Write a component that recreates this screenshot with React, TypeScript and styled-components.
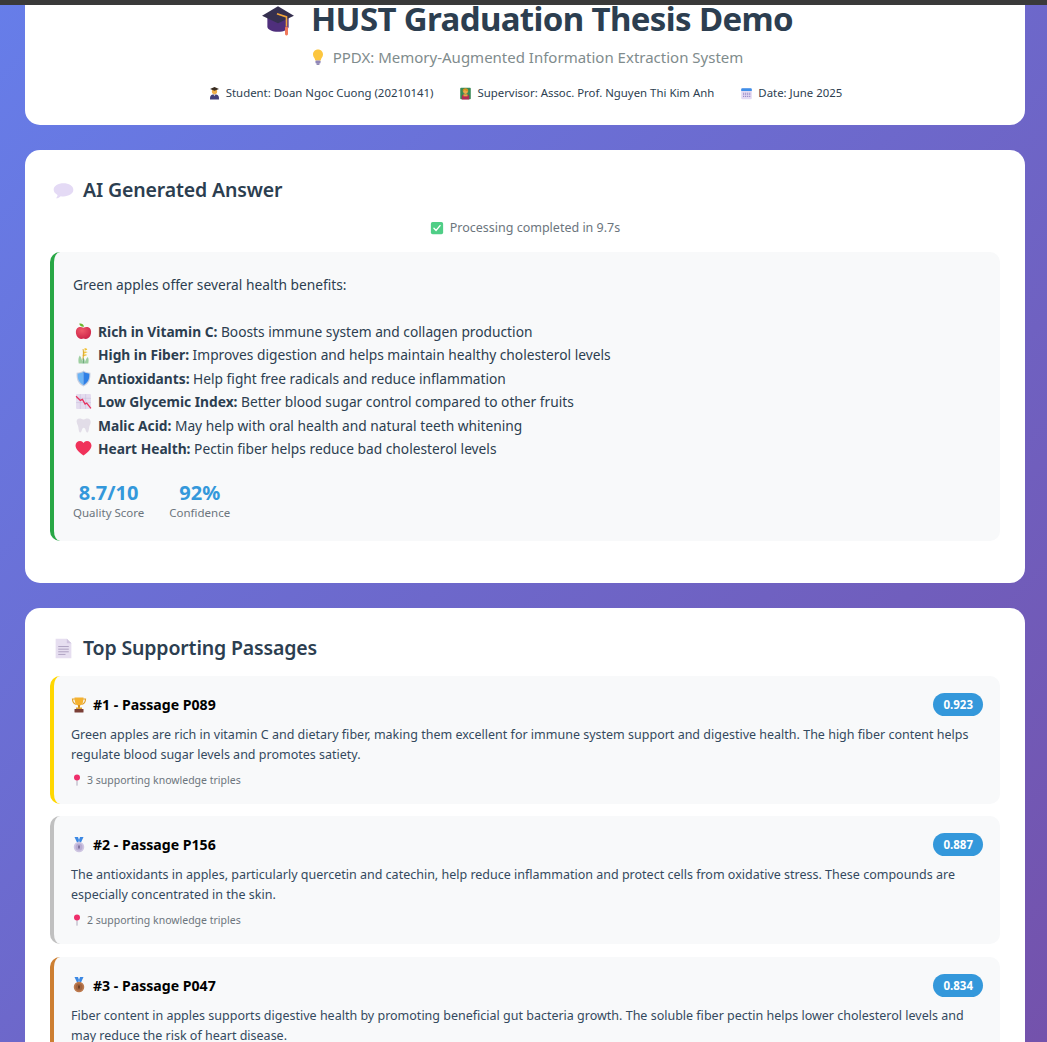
import React from 'react';
import styled, { createGlobalStyle } from 'styled-components';

type EmojiName =
  | 'cap' | 'bulb' | 'student' | 'teacher' | 'calendar' | 'balloon' | 'check'
  | 'apple' | 'corn' | 'shield' | 'chart' | 'tooth' | 'heart' | 'page'
  | 'trophy' | 'silver' | 'bronze' | 'pin';

const medal = (fill: string, dark: string, label: string) => (
  <>
    <path d="M7 0h7l3 9-4 4zM25 0h-7l-3 9 4 4z" fill="#3b88e3" />
    <circle cx="16" cy="20" r="10.500" fill={fill} />
    <circle cx="16" cy="20" r="7" fill={dark} opacity="0.55" />
    <rect x="14.500" y="17" width="3" height="6" fill={label} />
  </>
);

const drawings: Record<EmojiName, React.ReactNode> = {
  cap: (
    <>
      <path d="M6 14v9c0 3 4.500 5 10 5s10-2 10-5v-9z" fill="#4f2f7c" />
      <path d="M16 4 1 13l15 7 15-7z" fill="#35304f" />
      <path d="M15 11l9 3v9" fill="none" stroke="#f2a53a" strokeWidth="1.500" />
      <rect x="22.600" y="23" width="2.800" height="8.500" rx="1.300" fill="#f0785a" />
    </>
  ),
  bulb: (
    <>
      <path d="M16 1c6 0 10 4.400 10 10 0 5-4 7-4.500 12h-11C10 18 6 16 6 11 6 5.400 10 1 16 1z" fill="#fcc63f" />
      <rect x="11" y="23" width="10" height="6" rx="1.500" fill="#8f86b8" />
      <rect x="13" y="29" width="6" height="2.500" rx="1" fill="#6f659b" />
    </>
  ),
  student: (
    <>
      <path d="M5 31v-5c0-5 5-8 11-8s11 3 11 8v5z" fill="#43407a" />
      <circle cx="16" cy="11" r="6.500" fill="#f0b04a" />
      <path d="M16 0 5 5l11 4 11-4z" fill="#3a2c20" />
      <path d="M13 18l3 5 3-5z" fill="#ecdcc5" />
    </>
  ),
  teacher: (
    <>
      <rect x="3" y="2" width="26" height="28" rx="2" fill="#3a8a55" />
      <path d="M7 31v-8c0-3 4-5 9-5s9 2 9 5v8z" fill="#b32a55" />
      <path d="M11 18h10v5H11z" fill="#e0b040" />
      <circle cx="16" cy="11" r="6" fill="#eda94a" />
      <path d="M9 11c0-6 3-8 7-8s7 2 7 8c-3 0-7-1-9-4-1 2-3 4-5 4z" fill="#d8921f" />
    </>
  ),
  calendar: (
    <>
      <rect x="3" y="3" width="26" height="27" rx="3" fill="#e3d9f2" />
      <path d="M3 10V6a3 3 0 0 1 3-3h20a3 3 0 0 1 3 3v4z" fill="#3f8fe8" />
      <path d="M9 14v12M14 14v12M19 14v12M24 14v12" stroke="#8d7fc2" strokeWidth="2.500" strokeDasharray="2.500 1.500" />
    </>
  ),
  balloon: (
    <path d="M16 5c8 0 15 3.800 15 10s-7 10-15 10c-1.500 0-3-.1-4.300-.4C10 26.500 7 28 4.500 27.800c1.500-1.200 2.300-3 2.400-5C3.400 21 1 18.300 1 15 1 8.800 8 5 16 5z" fill="#e4daf5" />
  ),
  check: (
    <>
      <rect x="2" y="2" width="28" height="28" rx="4" fill="#4fce86" />
      <path d="M9 16.500l5 5 9-11" fill="none" stroke="#fff" strokeWidth="3.200" strokeLinecap="round" strokeLinejoin="round" />
    </>
  ),
  apple: (
    <>
      <defs>
        <radialGradient id="appleSkin" cx="0.4" cy="0.3" r="0.8">
          <stop offset="0" stopColor="#f0596a" />
          <stop offset="1" stopColor="#c91f45" />
        </radialGradient>
      </defs>
      <path d="M16 9c4-2 9-2 12 1 3 3.500 3 9 1 13.500-2 4-5.500 6.500-9 6.500-1.500 0-2.800-.6-4-.6s-2.500.6-4 .6c-3.500 0-7-2.500-9-6.500-2-4.500-2-10 1-13.500 3-3 8-3 12-1z" fill="url(#appleSkin)" />
      <path d="M8 1c4-1 8 .5 9 6-4 1-8-1-9-6z" fill="#6cb82e" />
    </>
  ),
  corn: (
    <>
      <path d="M18 2c3 0 5 1.500 5 3l-5 2zM15 9c3-1 7-1 9 .5l-7 3zM14 15c3-1.500 7-1.500 9 0l-7 3z" fill="#f2c43a" />
      <path d="M15 4c1 2 1 10 0 20" stroke="#d9a82e" strokeWidth="2" fill="none" />
      <path d="M7 31c-1-6-1-11 2-15 3 4 5 10 5 15zM25 31c1-5 1-9-1-12-3 3-5 8-6 12z" fill="#9ecfa0" />
      <path d="M14 31c0-5 0-8 2-11 2 3 2 6 2 11z" fill="#6fae7a" />
    </>
  ),
  shield: (
    <>
      <path d="M16 1c3 2.500 8 4 13 4 .5 11-1 20-13 26C4 25 2.500 16 3 5c5 0 10-1.500 13-4z" fill="#c8cfe0" />
      <path d="M16 3.500c-3 2-6.500 3-11 3.500-.2 9 1.500 16 11 21.500z" fill="#6db4f5" />
      <path d="M16 3.500c3 2 6.500 3 11 3.500.2 9-1.500 16-11 21.500z" fill="#2f80e6" />
    </>
  ),
  chart: (
    <>
      <rect x="2" y="2" width="28" height="28" rx="2" fill="#e4dcef" />
      <path d="M2 10h28M2 18h28M10 2v28M20 2v28" stroke="#c9bedb" strokeWidth="1" />
      <path d="M2 6l8 8 4-2 5 9 3-2 8 10" fill="none" stroke="#e8305d" strokeWidth="2.400" />
    </>
  ),
  tooth: (
    <path d="M9 3c3 0 4 1.500 7 1.500S20 3 23 3c5 0 7 4 6.500 8-.5 3.500-2.500 5-3 9-.4 3.500-1 9-3.500 9-3 0-2.500-9-6.500-9s-3.500 9-6.500 9c-2.500 0-3.100-5.500-3.500-9-.5-4-2.500-5.500-3-9C2 7 4 3 9 3z" fill="#e2dde8" />
  ),
  heart: (
    <path d="M16 29C7 23 1 17 1 10.500 1 5.500 5 2 9.500 2c2.800 0 5 1.400 6.500 3.800C17.500 3.400 19.700 2 22.500 2 27 2 31 5.500 31 10.500 31 17 25 23 16 29z" fill="#f0325a" />
  ),
  page: (
    <>
      <path d="M4 1h17l7 7v23H4z" fill="#e6def0" />
      <path d="M21 1l7 7h-7z" fill="#cfc3de" />
      <path d="M8 13h16M8 17h16M8 21h16M8 25h11" stroke="#a99cbd" strokeWidth="1.400" />
    </>
  ),
  trophy: (
    <>
      <path d="M9 4H3c0 7 3 10 8 11M23 4h6c0 7-3 10-8 11" fill="none" stroke="#e0a12b" strokeWidth="2.400" />
      <path d="M7 1h18c0 11-3 16-9 16S7 12 7 1z" fill="#f5b22f" />
      <rect x="14" y="16" width="4" height="6" fill="#d18e1f" />
      <rect x="10" y="21" width="12" height="3" fill="#e0a12b" />
      <rect x="7" y="24" width="18" height="7" rx="1" fill="#7a3f36" />
    </>
  ),
  silver: medal('#cfc6e2', '#a597c4', '#6e6190'),
  bronze: medal('#bd7a4e', '#8d5232', '#5d3420'),
  pin: (
    <>
      <path d="M16 14v17" stroke="#a79fb5" strokeWidth="2.400" />
      <circle cx="16" cy="9" r="8" fill="#ef2f6b" />
    </>
  ),
};

const GlobalStyle = createGlobalStyle`
  html, body {
    margin: 0;
    padding: 0;
    height: 1042px;
    overflow: hidden;
  }
  body {
    font-family: "Noto Sans", "Open Sans", sans-serif;
    color: #2c3e50;
  }
`;

// the reference is a scrolled page, so the gradient runs on past the visible part
const Page = styled.div`
  height: 1042px;
  overflow: hidden;
  background: linear-gradient(135deg, #667eea 0%, #764ba2 100%) 0 -30px / 1047px 1400px no-repeat;
`;

const WindowEdge = styled.div`
  height: 5px;
  background: #3a3a3a;
`;

const Column = styled.main`
  display: flex;
  flex-direction: column;
  gap: 25px;
  padding: 0 22px 0 25px;
`;

const Card = styled.section`
  background: #fff;
  border-radius: 15px;
  padding: 25px;
`;

const HeaderCard = styled(Card)`
  border-radius: 0 0 15px 15px;
  padding: 0 25px 21px;
  height: 120px;
  box-sizing: border-box;
  text-align: center;
`;

const Title = styled.h1`
  margin: 0;
  padding-left: 4px;
  height: 28px;
  font-size: 33px;
  line-height: 28px;
  letter-spacing: -0.63px;
  font-weight: 700;
  color: #2c3e50;
  display: flex;
  justify-content: center;
  align-items: center;
  gap: 16px;
`;

const Subtitle = styled.p`
  margin: 12px 0 0;
  padding-left: 3px;
  font-size: 15px;
  line-height: 24px;
  color: #7f8c8d;
  display: flex;
  justify-content: center;
  align-items: center;
  gap: 7px;
`;

const MetaRow = styled.div`
  margin-top: 15px;
  display: flex;
  justify-content: center;
  gap: 26px;
  font-size: 11.400px;
  line-height: 18px;
  color: #2c3e50;
`;

const MetaItem = styled.span`
  display: flex;
  align-items: center;
  gap: 5px;
`;

const SectionTitle = styled.h2`
  margin: 0;
  padding-left: 3px;
  font-size: 19.500px;
  line-height: 30px;
  letter-spacing: -0.15px;
  font-weight: 600;
  color: #2c3e50;
  display: flex;
  align-items: center;
  gap: 9px;
`;

const Status = styled.div`
  margin-top: 13px;
  display: flex;
  justify-content: center;
  align-items: center;
  gap: 6px;
  font-size: 12.500px;
  line-height: 20px;
  color: #6c757d;
`;

const AnswerBox = styled.div`
  margin-top: 14px;
  height: 289px;
  box-sizing: border-box;
  background: #f8f9fa;
  border-left: 4px solid #28a745;
  border-radius: 10px;
  padding: 21px 19px 0;
  font-size: 13.750px;
  line-height: 23.450px;
  margin-bottom: 17px;
`;

const Intro = styled.p`
  margin: 0 0 23.450px;
`;

const BenefitList = styled.ul`
  list-style: none;
  margin: 0;
  padding: 0;
`;

const Benefit = styled.li`
  display: flex;
  align-items: center;
  gap: 6px;
  padding-left: 2px;
  white-space: pre;
  strong {
    font-weight: 700;
  }
`;

const Stats = styled.div`
  margin-top: 19px;
  display: flex;
  gap: 25px;
`;

const Stat = styled.div`
  text-align: center;
`;

const StatValue = styled.div`
  font-size: 20px;
  line-height: 25px;
  font-weight: 700;
  color: #3498db;
`;

const StatLabel = styled.div`
  font-size: 11.500px;
  line-height: 16px;
  color: #6c757d;
`;

const PassageList = styled.div`
  margin-top: 13px;
  display: flex;
  flex-direction: column;
  gap: 12.300px;
`;

const Passage = styled.article<{ $accent: string }>`
  background: #f8f9fa;
  border-left: 4px solid ${props => props.$accent};
  border-radius: 10px;
  padding: 17px 17px 14px;
  height: 128px;
  box-sizing: border-box;
`;

const PassageHead = styled.div`
  display: flex;
  justify-content: space-between;
  align-items: center;
  height: 23px;
`;

const PassageTitle = styled.h3`
  margin: 0;
  font-size: 14.100px;
  font-weight: 700;
  color: #000;
  display: flex;
  align-items: center;
  gap: 6px;
`;

const Score = styled.span`
  background: #3498db;
  color: #fff;
  border-radius: 12px;
  padding: 0 10px;
  font-size: 11.500px;
  line-height: 23px;
  font-weight: 700;
`;

const PassageText = styled.p`
  margin: 9px 0 0;
  font-size: 12.500px;
  line-height: 20px;
  color: #34495e;
`;

const PassageNote = styled.div`
  margin-top: 7px;
  display: flex;
  align-items: center;
  gap: 4px;
  font-size: 10.500px;
  line-height: 16px;
  color: #6c757d;
`;

const Glyph = styled.svg<{ $size: number }>`
  width: ${props => props.$size}px;
  height: ${props => props.$size}px;
  flex: none;
`;

const Emoji = ({ name, size }: { name: EmojiName; size: number }) => (
  <Glyph viewBox="0 0 32 32" $size={size} aria-hidden="true">
    {drawings[name]}
  </Glyph>
);

const benefits: { icon: EmojiName; title: string; text: string }[] = [
  { icon: 'apple', title: 'Rich in Vitamin C:', text: 'Boosts immune system and collagen production' },
  { icon: 'corn', title: 'High in Fiber:', text: 'Improves digestion and helps maintain healthy cholesterol levels' },
  { icon: 'shield', title: 'Antioxidants:', text: 'Help fight free radicals and reduce inflammation' },
  { icon: 'chart', title: 'Low Glycemic Index:', text: 'Better blood sugar control compared to other fruits' },
  { icon: 'tooth', title: 'Malic Acid:', text: 'May help with oral health and natural teeth whitening' },
  { icon: 'heart', title: 'Heart Health:', text: 'Pectin fiber helps reduce bad cholesterol levels' },
];

const passages: { icon: EmojiName; accent: string; title: string; score: string; text: string; triples: number }[] = [
  {
    icon: 'trophy',
    accent: '#ffd700',
    title: '#1 - Passage P089',
    score: '0.923',
    text: 'Green apples are rich in vitamin C and dietary fiber, making them excellent for immune system support and digestive health. The high fiber content helps regulate blood sugar levels and promotes satiety.',
    triples: 3,
  },
  {
    icon: 'silver',
    accent: '#c0c0c0',
    title: '#2 - Passage P156',
    score: '0.887',
    text: 'The antioxidants in apples, particularly quercetin and catechin, help reduce inflammation and protect cells from oxidative stress. These compounds are especially concentrated in the skin.',
    triples: 2,
  },
  {
    icon: 'bronze',
    accent: '#cd7f32',
    title: '#3 - Passage P047',
    score: '0.834',
    text: 'Fiber content in apples supports digestive health by promoting beneficial gut bacteria growth. The soluble fiber pectin helps lower cholesterol levels and may reduce the risk of heart disease.',
    triples: 2,
  },
];

export default function App() {
  return (
    <Page>
      <GlobalStyle />
      <WindowEdge />
      <Column>
        <HeaderCard>
          <Title>
            <Emoji name="cap" size={34} />
            HUST Graduation Thesis Demo
          </Title>
          <Subtitle>
            <Emoji name="bulb" size={16} />
            PPDX: Memory-Augmented Information Extraction System
          </Subtitle>
          <MetaRow>
            <MetaItem><Emoji name="student" size={13} />Student: Doan Ngoc Cuong (20210141)</MetaItem>
            <MetaItem><Emoji name="teacher" size={13} />Supervisor: Assoc. Prof. Nguyen Thi Kim Anh</MetaItem>
            <MetaItem><Emoji name="calendar" size={13} />Date: June 2025</MetaItem>
          </MetaRow>
        </HeaderCard>

        <Card>
          <SectionTitle>
            <Emoji name="balloon" size={21} />
            AI Generated Answer
          </SectionTitle>
          <Status>
            <Emoji name="check" size={14} />
            Processing completed in 9.7s
          </Status>
          <AnswerBox>
            <Intro>Green apples offer several health benefits:</Intro>
            <BenefitList>
              {benefits.map(item => (
                <Benefit key={item.title}>
                  <Emoji name={item.icon} size={17} />
                  <span><strong>{item.title}</strong> {item.text}</span>
                </Benefit>
              ))}
            </BenefitList>
            <Stats>
              <Stat>
                <StatValue>8.7/10</StatValue>
                <StatLabel>Quality Score</StatLabel>
              </Stat>
              <Stat>
                <StatValue>92%</StatValue>
                <StatLabel>Confidence</StatLabel>
              </Stat>
            </Stats>
          </AnswerBox>
        </Card>

        <Card>
          <SectionTitle>
            <Emoji name="page" size={21} />
            Top Supporting Passages
          </SectionTitle>
          <PassageList>
            {passages.map(item => (
              <Passage key={item.title} $accent={item.accent}>
                <PassageHead>
                  <PassageTitle>
                    <Emoji name={item.icon} size={16} />
                    {item.title}
                  </PassageTitle>
                  <Score>{item.score}</Score>
                </PassageHead>
                <PassageText>{item.text}</PassageText>
                <PassageNote>
                  <Emoji name="pin" size={12} />
                  {item.triples} supporting knowledge triples
                </PassageNote>
              </Passage>
            ))}
          </PassageList>
        </Card>
      </Column>
    </Page>
  );
}
